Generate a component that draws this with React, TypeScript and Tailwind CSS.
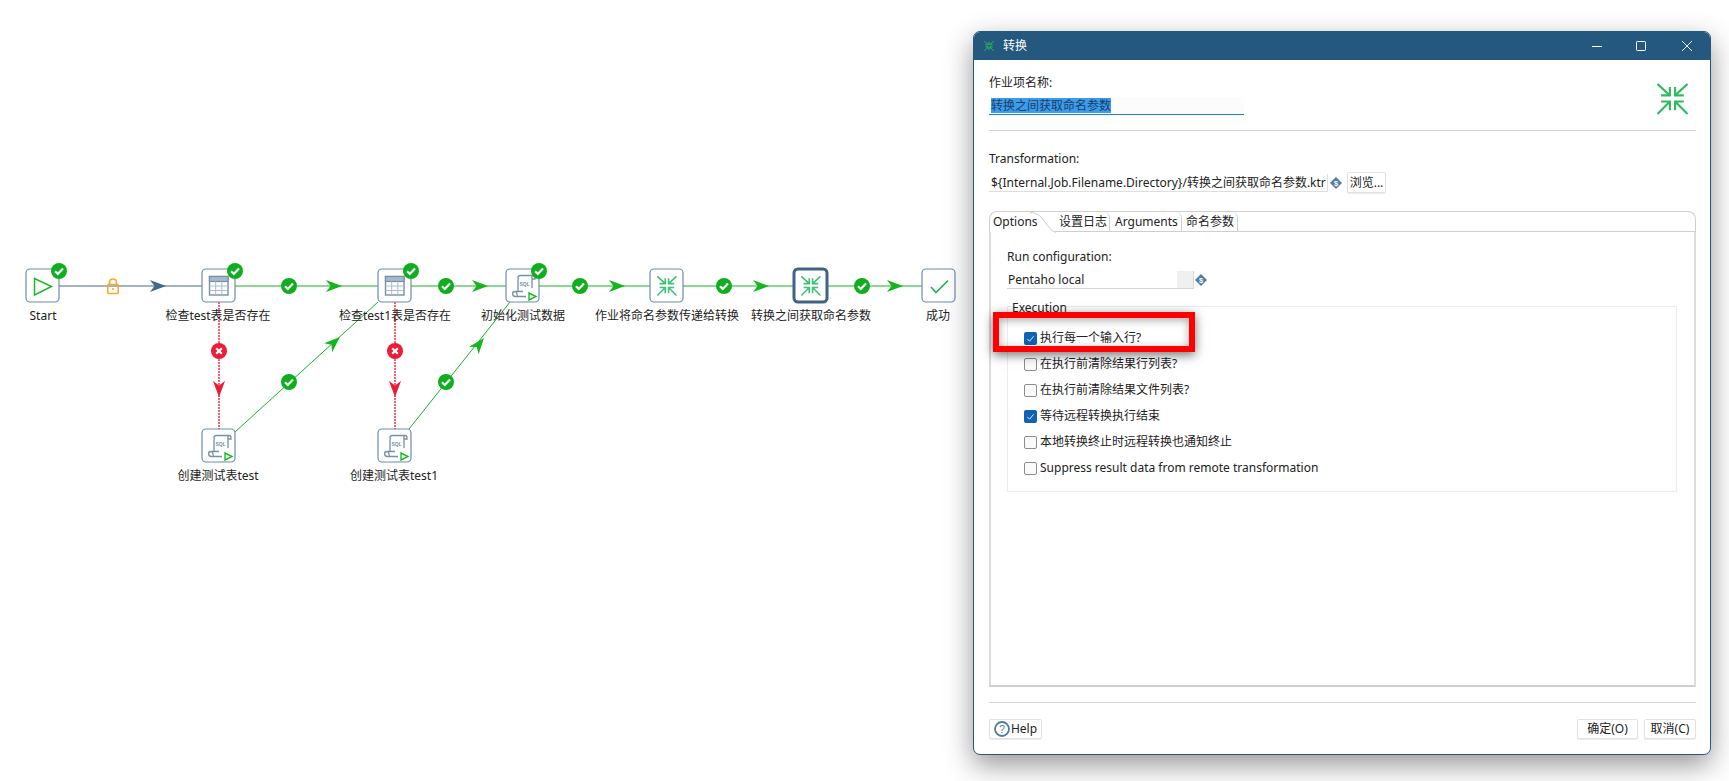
import React from "react";

const GREEN = "#14b51e";
const BLUE_LINE = "#44698c";
const NODE_BORDER = "#6f8ca8";

const Arrow = ({ x, y, angle = 0, fill }: { x: number; y: number; angle?: number; fill: string }) => (
  <path d="M0 0 L-16 -6 L-11.5 0 L-16 6 Z" fill={fill} transform={`translate(${x} ${y}) rotate(${angle})`} />
);

const OkBadge = ({ x, y }: { x: number; y: number }) => (
  <g transform={`translate(${x} ${y})`}>
    <circle r="8" fill="#0fae1e" />
    <path d="M-4 0.2 L-1.2 3 L4 -2.6" fill="none" stroke="#fff" strokeWidth="2.2" />
  </g>
);

const ErrorBadge = ({ x, y }: { x: number; y: number }) => (
  <g transform={`translate(${x} ${y})`}>
    <circle r="8" fill="#ec1c34" />
    <path d="M-2.8 -2.8 L2.8 2.8 M2.8 -2.8 L-2.8 2.8" fill="none" stroke="#fff" strokeWidth="2.2" />
  </g>
);

const NodeBox = ({ x, y, thick }: { x: number; y: number; thick?: boolean }) => (
  <rect
    x={x}
    y={y}
    width="33"
    height="33"
    rx="4"
    fill="#fff"
    stroke={thick ? "#3f6485" : NODE_BORDER}
    strokeWidth={thick ? 3 : 1.2}
  />
);

const TableGlyph = ({ x, y }: { x: number; y: number }) => (
  <g transform={`translate(${x} ${y})`} fill="none">
    <rect x="7.5" y="7.5" width="18.5" height="18.5" fill="#fff" stroke="#7690aa" strokeWidth="1.4" />
    <rect x="7.5" y="7.5" width="18.5" height="5" fill="#a9bac9" stroke="#7690aa" strokeWidth="1.2" />
    <path d="M7.5 17 H26 M7.5 21.5 H26 M13.7 12.5 V26 M19.8 12.5 V26" stroke="#a9bac9" strokeWidth="1" />
  </g>
);

const SqlGlyph = ({ x, y }: { x: number; y: number }) => (
  <g transform={`translate(${x} ${y})`}>
    <path
      d="M12 8.5 Q12 6.5 14.5 6.5 H27 Q29 6.5 29 8.5 V10 H26 V19 M12 8.5 V22 M26.5 6.5 Q25.5 8 26 10 M6.5 25 Q6.5 22.5 9 22.5 H17 M9 22.5 Q11.5 23.5 11 26 Q11 27.5 13 27.5 H20 M6.5 25 Q7 27.5 9.5 27.5 H13"
      fill="none"
      stroke="#7690aa"
      strokeWidth="1.3"
    />
    <text x="13.5" y="17" fontSize="5" fontFamily="'Liberation Sans', sans-serif" fontWeight="700" fill="#7690aa">
      SQL
    </text>
    <path d="M23 24 L30 27.5 L23 31 Z" fill="#fff" stroke="#20b82a" strokeWidth="1.4" />
  </g>
);

const CompressPaths = ({ color, width }: { color: string; width: number }) => (
  <g fill="none" stroke={color} strokeWidth={width}>
    <path d="M0.5 0.5 L12.5 11.5 M4 11.5 H12.5 V3.5" />
    <path d="M29.5 0.5 L17.5 11.5 M26 11.5 H17.5 V3.5" />
    <path d="M0.5 29.5 L12.5 17.5 M4 17.5 H12.5 V26" />
    <path d="M29.5 29.5 L17.5 17.5 M26 17.5 H17.5 V26" />
  </g>
);

const CompressIcon = ({ className }: { className: string }) => (
  <svg className={className} viewBox="0 0 30 30">
    <CompressPaths color="#2dbb5d" width={2} />
  </svg>
);

const FlowDiagram = () => (
  <svg className="absolute left-0 top-0 w-[970px] h-[520px]" viewBox="0 0 970 520">
    {/* hops */}
    <path d="M59 286 H202" stroke={BLUE_LINE} strokeWidth="1.2" fill="none" />
    <path d="M235 286 H378 M411 286 H506 M539 286 H650 M683 286 H793 M828 286 H922" stroke={GREEN} strokeWidth="1.2" fill="none" />
    <path d="M235 432 L378 302 M409 429 L510 302" stroke={GREEN} strokeWidth="1" fill="none" />
    <path d="M219 302 V429 M395 302 V429" stroke="#ff6075" strokeWidth="2" strokeDasharray="2 1" fill="none" />

    <Arrow x={166} y={286} fill={BLUE_LINE} />
    <Arrow x={342} y={286} fill={GREEN} />
    <Arrow x={488} y={286} fill={GREEN} />
    <Arrow x={625} y={286} fill={GREEN} />
    <Arrow x={769} y={286} fill={GREEN} />
    <Arrow x={903} y={286} fill={GREEN} />
    <Arrow x={340} y={337} angle={-42} fill={GREEN} />
    <Arrow x={484} y={338} angle={-51} fill={GREEN} />
    <Arrow x={219} y={397} angle={90} fill="#ec1c34" />
    <Arrow x={395} y={397} angle={90} fill="#ec1c34" />

    {/* lock on the first hop */}
    <g fill="none" stroke="#ffa726" strokeWidth="1.6">
      <path d="M109.5 284.5 V282.5 Q109.5 279 113 279 Q116.5 279 116.5 282.5 V284.5" />
      <rect x="107.8" y="284.5" width="10.4" height="9" rx="0.8" />
      <path d="M113 288 V290" />
    </g>

    <OkBadge x={289} y={286} />
    <OkBadge x={446} y={286} />
    <OkBadge x={580} y={286} />
    <OkBadge x={724} y={286} />
    <OkBadge x={862} y={286} />
    <OkBadge x={289} y={382} />
    <OkBadge x={446} y={382} />
    <ErrorBadge x={219} y={351} />
    <ErrorBadge x={395} y={351} />

    {/* nodes */}
    <NodeBox x={26} y={269} />
    <path d="M34.5 278.5 L51.5 286.5 L34.5 295 Z" fill="none" stroke="#20b82a" strokeWidth="1.5" />

    <NodeBox x={202} y={269} />
    <TableGlyph x={202} y={269} />
    <NodeBox x={378} y={269} />
    <TableGlyph x={378} y={269} />

    <NodeBox x={506} y={269} />
    <SqlGlyph x={506} y={269} />
    <NodeBox x={202} y={429} />
    <SqlGlyph x={202} y={429} />
    <NodeBox x={378} y={429} />
    <SqlGlyph x={378} y={429} />

    <NodeBox x={650} y={269} />
    <g transform="translate(657 276) scale(0.66)">
      <CompressPaths color="#3cc474" width={2.4} />
    </g>
    <NodeBox x={794} y={269} thick />
    <g transform="translate(801 276) scale(0.66)">
      <CompressPaths color="#3cc474" width={2.4} />
    </g>

    <NodeBox x={922} y={269} />
    <path d="M931 287 L936 292.5 L948 280.5" fill="none" stroke="#22b14c" strokeWidth="1.6" />

    <OkBadge x={59} y={271} />
    <OkBadge x={235} y={271} />
    <OkBadge x={411} y={271} />
    <OkBadge x={539} y={271} />
  </svg>
);

const nodeLabels = [
  { text: "Start", className: "left-[43px] top-[308px]" },
  { text: "检查test表是否存在", className: "left-[218px] top-[308px]" },
  { text: "检查test1表是否存在", className: "left-[395px] top-[308px]" },
  { text: "初始化测试数据", className: "left-[523px] top-[308px]" },
  { text: "作业将命名参数传递给转换", className: "left-[667px] top-[308px]" },
  { text: "转换之间获取命名参数", className: "left-[811px] top-[308px]" },
  { text: "成功", className: "left-[938px] top-[308px]" },
  { text: "创建测试表test", className: "left-[218px] top-[468px]" },
  { text: "创建测试表test1", className: "left-[394px] top-[468px]" },
];

const VariableIcon = ({ className }: { className: string }) => (
  <svg className={className} viewBox="0 0 12 12">
    <path d="M6 0 L12 6 L6 12 L0 6 Z" fill="#4f7da3" />
    <text x="6" y="8.6" textAnchor="middle" fontSize="7.5" fontWeight="700" fontFamily="'Liberation Sans', sans-serif" fill="#fff">
      $
    </text>
  </svg>
);

const executionOptions = [
  { label: "执行每一个输入行?", checked: true },
  { label: "在执行前清除结果行列表?", checked: false },
  { label: "在执行前清除结果文件列表?", checked: false },
  { label: "等待远程转换执行结束", checked: true },
  { label: "本地转换终止时远程转换也通知终止", checked: false },
  { label: "Suppress result data from remote transformation", checked: false },
];

const CheckRow = ({ label, checked }: { label: string; checked: boolean }) => (
  <div className="flex items-center h-4 gap-[3px]">
    {checked ? (
      <span className="w-[13px] h-[13px] rounded-[2px] bg-[#0f62b5] flex items-center justify-center">
        <svg className="w-[9px] h-[9px]" viewBox="0 0 10 10">
          <path d="M1.5 5.5 L4 8 L8.5 2.5" fill="none" stroke="#dfe9f5" strokeWidth="1.1" />
        </svg>
      </span>
    ) : (
      <span className="w-[13px] h-[13px] rounded-[2px] border border-[#8c8c8c] bg-[#fafafa]" />
    )}
    <span>{label}</span>
  </div>
);

const DialogButton = ({ children, className }: { children: React.ReactNode; className: string }) => (
  <button className={`h-[20px] bg-white border border-[#e2e2e2] rounded-[2px] shadow-[0_1px_1px_rgba(0,0,0,0.08)] flex items-center justify-center ${className}`}>
    {children}
  </button>
);

const TransDialog = () => (
  <div className="absolute left-[973px] top-[31px] w-[738px] h-[724px] bg-white border border-[#24587f] rounded-[7px] shadow-[0_10px_28px_rgba(0,0,0,0.42)] flex flex-col overflow-visible">
    {/* Title bar */}
    <div className="h-[28px] shrink-0 bg-[#24587f] rounded-t-[6px] flex items-center text-white pl-[10px] pr-[18px]">
      <svg className="w-[10px] h-[10px]" viewBox="0 0 30 30">
        <CompressPaths color="#2bb45a" width={3} />
      </svg>
      <span className="ml-[9px]">转换</span>
      <div className="ml-auto flex items-center gap-[35px]">
        <svg className="w-[10px] h-[10px]" viewBox="0 0 10 10">
          <path d="M0 5.5 H10" stroke="#fff" strokeWidth="1" />
        </svg>
        <svg className="w-[10px] h-[10px] relative left-[-1px]" viewBox="0 0 10 10">
          <rect x="0.5" y="0.5" width="9" height="9" rx="0.8" fill="none" stroke="#fff" strokeWidth="1" />
        </svg>
        <svg className="w-[10px] h-[10px]" viewBox="0 0 10 10">
          <path d="M0 0 L10 10 M10 0 L0 10" stroke="#fff" strokeWidth="0.9" />
        </svg>
      </div>
    </div>

    <div className="flex-1 flex flex-col pl-[15px] pr-[14px] pt-[15px]">
      {/* Entry name */}
      <div className="flex items-end justify-between h-[40px]">
        <div>
          <div className="h-4 leading-4">作业项名称:</div>
          <div className="mt-[6px] w-[255px] h-[18px] border-b border-[#1b7fdc] bg-[#fcfcfc] pl-[2px] leading-[17px]">
            <span className="bg-[#3d9be9] text-[#163f6b] inline-block h-[15px] leading-[15px]">转换之间获取命名参数</span>
          </div>
        </div>
        <CompressIcon className="w-[31px] h-[32px] mr-[8px]" />
      </div>
      <div className="mt-[15px] h-px bg-[#d4d4d4]" />

      {/* Transformation */}
      <div className="mt-5 h-4 leading-4">Transformation:</div>
      <div className="mt-[5px] flex items-center h-[21px]">
        <div className="w-[339px] h-[18px] bg-white border-b border-r border-[#dedede] border-t-[#f2f2f2] pl-[2px] leading-[18px] whitespace-nowrap overflow-hidden">
          {"${Internal.Job.Filename.Directory}/转换之间获取命名参数.ktr"}
        </div>
        <VariableIcon className="w-3 h-3 ml-[2px]" />
        <DialogButton className="ml-[5px] w-[39px] !h-[21px]">浏览...</DialogButton>
      </div>

      {/* Tabs */}
      <div className="mt-[18px] h-[21px] flex border border-b-0 border-[#cfcfcf] rounded-t-[8px]">
        <div className="relative w-[65px] pl-[3px] leading-[20px]">
          Options
          <svg className="absolute left-[40px] top-0 w-[26px] h-[21px]" viewBox="0 0 26 21">
            <path d="M0 0.5 Q7 0.5 11 5 L18 14 Q22 20 26 20.5" fill="none" stroke="#cfcfcf" strokeWidth="1" />
          </svg>
        </div>
        <div className="w-[55px] pl-[4px] leading-[20px] border-r border-b border-[#cfcfcf] rounded-tr-[6px]">设置日志</div>
        <div className="w-[72px] pl-[5px] leading-[20px] border-r border-b border-[#cfcfcf] rounded-tr-[6px]">Arguments</div>
        <div className="w-[56px] pl-[4px] leading-[20px] border-r border-b border-[#cfcfcf] rounded-tr-[6px]">命名参数</div>
        <div className="flex-1 border-b border-[#cfcfcf]" />
      </div>
      <div className="h-[455px] border-2 border-t-0 border-[#dcdcdc] border-b-[#cfcfcf] pl-[16px] pr-[17px] pt-[17px]">
        <div className="h-4 leading-4">Run configuration:</div>
        <div className="mt-[6px] flex items-center">
          <div className="w-[187px] h-[18px] border-b border-r border-[#d6d6d6] flex leading-[17px] pl-[1px]">
            <span className="flex-1">Pentaho local</span>
            <span className="w-[16px] bg-[#f0f0f0]" />
          </div>
          <VariableIcon className="w-3 h-3 ml-[1px]" />
        </div>

        {/* Execution group */}
        <div className="relative mt-[17px] h-[186px] border border-[#ececec] pl-[16px] pt-[23px] flex flex-col gap-[10px]">
          <span className="absolute left-[4px] top-[-7px] h-4 leading-4 bg-white">Execution</span>
          {executionOptions.map((option) => (
            <CheckRow key={option.label} label={option.label} checked={option.checked} />
          ))}
        </div>
      </div>

      <div className="mt-[15px] h-px bg-[#d4d4d4]" />

      {/* Footer */}
      <div className="mt-4 flex items-center">
        <DialogButton className="w-[53px] gap-[1px]">
          <svg className="w-4 h-4" viewBox="0 0 16 16">
            <circle cx="8" cy="8" r="7" fill="#fff" stroke="#4f7da3" strokeWidth="1.8" />
            <text x="8" y="11.5" textAnchor="middle" fontSize="10" fontFamily="'Liberation Sans', sans-serif" fill="#4f7da3">
              ?
            </text>
          </svg>
          Help
        </DialogButton>
        <DialogButton className="ml-auto w-[61px]">确定(O)</DialogButton>
        <DialogButton className="ml-[6px] w-[52px]">取消(C)</DialogButton>
      </div>
    </div>

    {/* Red annotation drawn over the screenshot */}
    <div className="absolute left-[19px] top-[280px] w-[202px] h-[40px] border-[6px] border-[#ff0000] shadow-[0_3px_10px_rgba(0,0,0,0.55),inset_0_2px_8px_rgba(0,0,0,0.35)]" />
  </div>
);

export default function App() {
  return (
    <div className="relative w-[1729px] h-[781px] bg-white overflow-hidden text-[12px] text-[#222] font-['Noto_Sans','Noto_Sans_CJK_SC',sans-serif]">
      <FlowDiagram />
      {nodeLabels.map((label) => (
        <span key={label.text} className={`absolute -translate-x-1/2 whitespace-nowrap leading-4 ${label.className}`}>
          {label.text}
        </span>
      ))}
      <TransDialog />
    </div>
  );
}
